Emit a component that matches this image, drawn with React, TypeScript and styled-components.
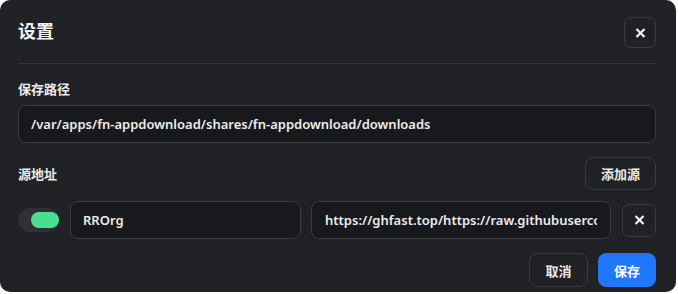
import React from "react";
import styled, { createGlobalStyle } from "styled-components";

const Global = createGlobalStyle`
  html, body { margin: 0; padding: 0; background: #ffffff; }
  * { box-sizing: border-box; }
  body { font-family: "Noto Sans", "Noto Sans CJK SC", sans-serif; }
`;

const Dialog = styled.div`
  width: 676px;
  height: 292px;
  background: #212225;
  border-radius: 10px;
  padding: 17px 20px 0 18px;
  display: flex;
  flex-direction: column;
  color: #ececec;
  overflow: hidden;
`;

const Header = styled.div`
  display: flex;
  justify-content: space-between;
  align-items: flex-start;
  height: 31px;
`;

const Title = styled.h2`
  margin: 0;
  font-size: 18px;
  line-height: 26px;
  font-weight: 700;
  color: #f2f2f2;
  font-family: "Noto Sans CJK SC", sans-serif;
`;

const IconButton = styled.button<{ $w: number; $h: number }>`
  width: ${(p) => p.$w}px;
  height: ${(p) => p.$h}px;
  border: 1px solid #3a3b3f;
  border-radius: 7px;
  background: transparent;
  padding: 0;
  display: flex;
  align-items: center;
  justify-content: center;
  color: #f0f0f0;
  cursor: pointer;
`;

const Divider = styled.hr`
  margin: 15px 0 0;
  border: none;
  height: 1px;
  background: #35363a;
`;

const Label = styled.div<{ $mt?: number }>`
  font-size: 13px;
  line-height: 20px;
  font-weight: 700;
  color: #ececec;
  font-family: "Noto Sans CJK SC", sans-serif;
  margin-top: ${(p) => p.$mt ?? 0}px;
`;

const TextInput = styled.input`
  height: 38px;
  border: 1px solid #3a3b3f;
  border-radius: 8px;
  background: #18191c;
  color: #ececec;
  font-family: "Noto Sans", "Noto Sans CJK SC", sans-serif;
  font-size: 13px;
  font-weight: 600;
  padding: 0 12px;
  outline: none;
  min-width: 0;
`;

const PathInput = styled(TextInput)`
  width: 100%;
  margin-top: 6px;
`;

const SectionRow = styled.div`
  display: flex;
  justify-content: space-between;
  align-items: center;
  margin-top: 14px;
  height: 33px;
`;

const TextButton = styled.button<{ $primary?: boolean; $w: number; $h: number }>`
  width: ${(p) => p.$w}px;
  height: ${(p) => p.$h}px;
  border-radius: 8px;
  border: 1px solid ${(p) => (p.$primary ? "#1e77fd" : "#3a3b3f")};
  background: ${(p) => (p.$primary ? "#1e77fd" : "transparent")};
  color: ${(p) => (p.$primary ? "#ffffff" : "#ececec")};
  font-family: "Noto Sans CJK SC", sans-serif;
  font-size: 13px;
  font-weight: 700;
  padding: 0;
  cursor: pointer;
`;

const SourceRow = styled.div`
  display: flex;
  align-items: center;
  margin-top: 11px;
  height: 38px;
`;

const Toggle = styled.div`
  width: 41px;
  height: 24px;
  border-radius: 12px;
  background: #2e3035;
  display: flex;
  align-items: center;
  justify-content: flex-end;
  padding: 0 0 0 13px;
  flex: 0 0 auto;
`;

const Knob = styled.div`
  width: 28px;
  height: 16px;
  border-radius: 8px;
  background: #4ade8f;
`;

const NameInput = styled(TextInput)`
  flex: 0 0 231px;
  margin-left: 11px;
`;

const UrlInput = styled(TextInput)`
  flex: 0 0 300px;
  margin-left: 10px;
  padding: 0 13px;
`;

const DeleteWrap = styled.div`
  margin-left: 11px;
  display: flex;
`;

const Footer = styled.div`
  display: flex;
  justify-content: flex-end;
  gap: 10px;
  margin-top: 14px;
`;

const CloseIcon = () => (
  <svg width="11" height="10" viewBox="0 0 11 10">
    <path d="M1.5 1L9.5 9M9.5 1L1.5 9" stroke="currentColor" strokeWidth="2.2" />
  </svg>
);

export default function App() {
  return (
    <>
      <Global />
      <Dialog>
        <Header>
          <Title>设置</Title>
          <IconButton $w={32} $h={31} aria-label="关闭">
            <CloseIcon />
          </IconButton>
        </Header>
        <Divider />
        <Label $mt={15}>保存路径</Label>
        <PathInput readOnly value="/var/apps/fn-appdownload/shares/fn-appdownload/downloads" />
        <SectionRow>
          <Label>源地址</Label>
          <TextButton $w={71} $h={33}>添加源</TextButton>
        </SectionRow>
        <SourceRow>
          <Toggle>
            <Knob />
          </Toggle>
          <NameInput readOnly value="RROrg" />
          <UrlInput readOnly value="https://ghfast.top/https://raw.githubusercontent.com/RROrg/rr/main/rr.json" />
          <DeleteWrap>
            <IconButton $w={34} $h={33} aria-label="删除">
              <CloseIcon />
            </IconButton>
          </DeleteWrap>
        </SourceRow>
        <Footer>
          <TextButton $w={59} $h={34}>取消</TextButton>
          <TextButton $primary $w={58} $h={34}>保存</TextButton>
        </Footer>
      </Dialog>
    </>
  );
}
